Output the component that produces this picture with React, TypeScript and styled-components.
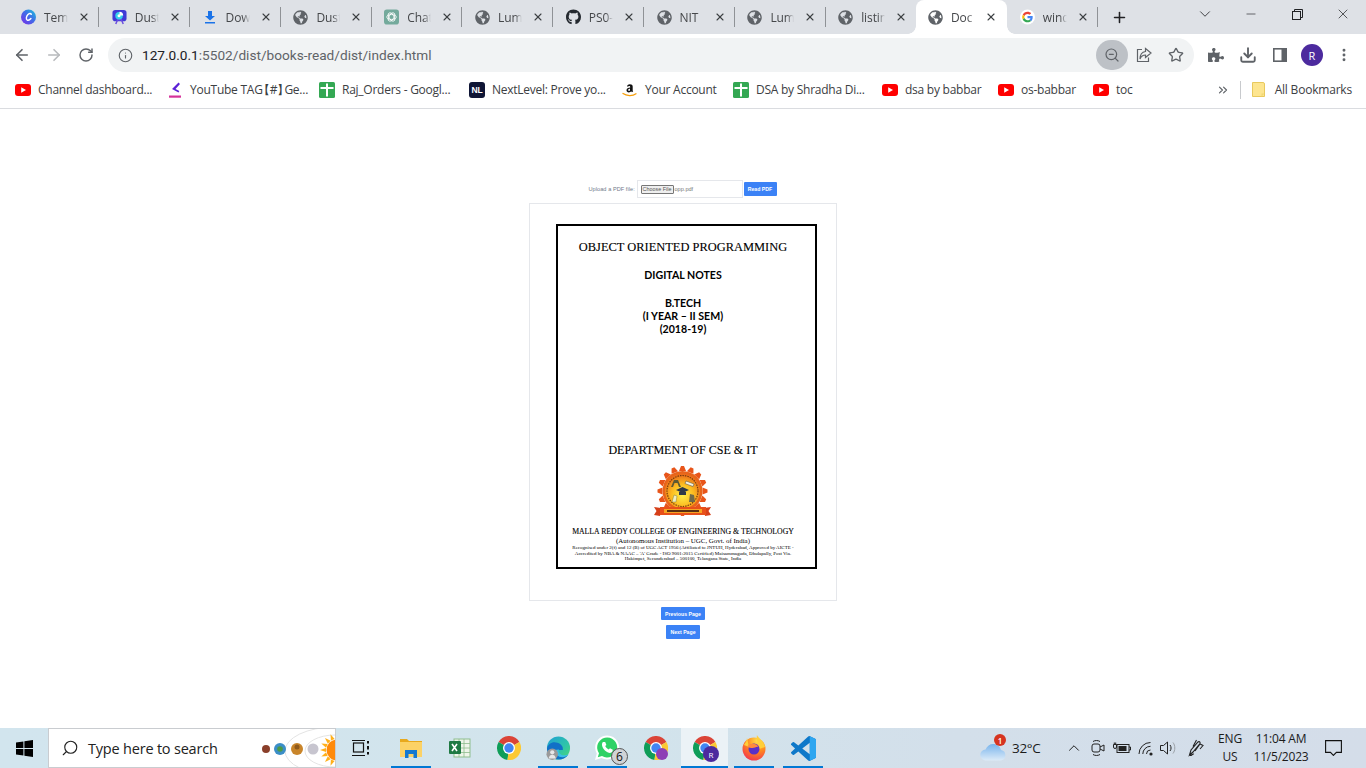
import React from "react";
import styled, { createGlobalStyle } from "styled-components";
import { FaGlobeAmericas, FaGithub, FaPuzzlePiece } from "react-icons/fa";
import {
  ArrowLeft, ArrowRight, RotateCw, Info, ZoomOut, Star, Download, MoreVertical, X, Plus, ChevronDown,
  Minus, Search, ChevronUp, ChevronsRight,
} from "lucide-react";

const Global = createGlobalStyle`
  html, body { margin: 0; padding: 0; background: #fff; overflow: hidden; }
  * { box-sizing: border-box; }
`;

const UI = `"Open Sans", "Noto Sans", "Liberation Sans", sans-serif`;
const Serif = `"Liberation Serif", serif`;

const Page = styled.div`
  width: 1366px; height: 768px; display: flex; flex-direction: column; font-family: ${UI}; overflow: hidden;
`;

/* ---- tab strip ---- */
const TabStrip = styled.div`
  height: 34px; background: #dee1e6; display: flex; padding-left: 9px; flex: none;
`;
const Tab = styled.div<{ $active?: boolean; $noSep?: boolean }>`
  width: 90.8px; flex: none; height: 34px; display: flex; align-items: center; padding-left: 12px;
  position: relative; color: #45474a; font-size: 12px; letter-spacing: -0.1px;
  background: ${(p) => (p.$active ? "#fff" : "transparent")};
  border-radius: ${(p) => (p.$active ? "8px 8px 0 0" : "0")};
  margin-left: ${(p) => (p.$active ? "-1px" : "0")};
  margin-right: ${(p) => (p.$active ? "1px" : "0")};
  &::after {
    content: ""; display: ${(p) => (p.$noSep ? "none" : "block")}; position: absolute; right: 0.5px; top: 7px; width: 1px; height: 20px; background: #8f9296;
  }
`;
const ActiveFlare = styled.span<{ $side: "left" | "right" }>`
  position: absolute; bottom: 0; width: 8px; height: 8px;
  ${(p) => (p.$side === "left" ? "left: -8px;" : "right: -8px;")}
  background: radial-gradient(circle at ${(p) => (p.$side === "left" ? "0 0" : "100% 0")}, transparent 7.5px, #fff 8px);
`;
const TabIcon = styled.span`
  width: 15px; height: 16px; flex: none; display: flex; align-items: center; justify-content: center; color: #5f6368; margin-right: 8px;
`;
const TabTitle = styled.span`
  width: 24px; flex: none; overflow: hidden; white-space: nowrap; font-size: 12px;
  -webkit-mask-image: linear-gradient(90deg, #000 70%, transparent 100%);
  mask-image: linear-gradient(90deg, #000 70%, transparent 100%);
`;
const TabClose = styled.span`
  margin-left: 10px; display: flex; color: #3c4043;
`;
const NewTab = styled.div`
  width: 42px; height: 34px; display: flex; align-items: center; justify-content: center; color: #202124; flex: none;
`;
const Spacer = styled.div`flex: 1;`;
const WinBtn = styled.div`
  width: 46px; height: 28px; display: flex; align-items: center; justify-content: center; color: #202124; flex: none;
`;
const RestoreIcon = styled.svg`width: 11px; height: 11px;`;

/* ---- toolbar ---- */
const Toolbar = styled.div`
  height: 38px; background: #fff; display: flex; align-items: flex-start; padding-top: 4px; flex: none; position: relative;
`;
const NavBtn = styled.div<{ $dim?: boolean }>`
  width: 32px; height: 34px; display: flex; align-items: center; justify-content: center; flex: none;
  color: ${(p) => (p.$dim ? "#b8babd" : "#5f6368")};
`;
const NavRow = styled.div`display: flex; padding-left: 6px; width: 108px; flex: none;`;
const Omnibox = styled.div`
  width: 1086px; height: 34px; background: #f1f3f4; border-radius: 17px; display: flex; align-items: center; flex: none;
  padding-left: 10px;
`;
const UrlInfo = styled.span`display: flex; color: #5f6368; width: 24px; flex: none;`;
const Url = styled.span`font-family: "Roboto", sans-serif; font-size: 13.65px; color: #5f6368; white-space: nowrap;
  b { font-weight: 400; color: #202124; }
`;
const OmniActions = styled.div`margin-left: auto; display: flex; align-items: center; padding-right: 2px;`;
const ZoomPill = styled.div`
  width: 32px; height: 30px; border-radius: 15px; background: #bdc1c6; display: flex; align-items: center; justify-content: center; color: #5f6368;
`;
const OmniBtn = styled.div`width: 32px; height: 30px; display: flex; align-items: center; justify-content: center; color: #5f6368;`;
const ToolBtns = styled.div`display: flex; align-items: center; height: 34px; padding-left: 6px;`;
const ToolBtn = styled.div`width: 32px; height: 34px; display: flex; align-items: center; justify-content: center; color: #5f6368; flex: none;`;
const Avatar = styled.div<{ $size?: number; $color?: string }>`
  width: ${(p) => p.$size ?? 22}px; height: ${(p) => p.$size ?? 22}px; border-radius: 50%; background: ${(p) => p.$color ?? "#4c2a9e"}; color: #fff;
  font-size: ${(p) => ((p.$size ?? 22) > 16 ? 11 : 8)}px; display: flex; align-items: center; justify-content: center;
`;

/* ---- bookmarks ---- */
const BookmarkBar = styled.div`
  height: 37px; background: #fff; border-bottom: 1px solid #dadce0; display: flex; align-items: center; padding: 0 0 1px 15px; flex: none;
`;
const Bookmark = styled.div<{ $w: number }>`
  width: ${(p) => p.$w}px; flex: none; display: flex; align-items: center; gap: 7px; font-size: 12px; color: #3c4043; white-space: nowrap; letter-spacing: -0.25px;
`;
const Squeezed = styled.span`margin: 0 -5px; letter-spacing: 0;`;
const BmIcon = styled.span`width: 16px; height: 16px; flex: none; display: flex; align-items: center; justify-content: center;`;
const BmRight = styled.div`
  margin-left: auto; display: flex; align-items: center; font-size: 12px; color: #3c4043; padding-right: 14px; letter-spacing: -0.2px;
`;
const BmDivider = styled.span`width: 1px; height: 18px; background: #c8cacd; margin: 0 11px 0 10px;`;
const BmLabel = styled.span`margin-left: 10px;`;

/* ---- page content ---- */
const Main = styled.main`
  flex: 1; background: #fff; display: flex; flex-direction: column; align-items: center; padding-top: 71px; min-height: 0;
`;
const UploadRow = styled.div`
  display: flex; align-items: center; height: 18px; font-family: "Liberation Sans", sans-serif; font-size: 5.6px; color: #6b7280;
`;
const UploadLabel = styled.span`width: 48px; flex: none; white-space: nowrap; color: #6f7a8a; letter-spacing: 0.05px; margin-left: 1px;`;
const FileBox = styled.div`
  width: 106px; height: 18px; border: 1px solid #e5e7eb; display: flex; align-items: center; padding-left: 3px; gap: 1px; flex: none; background: #fff; color: #777;
`;
const FileBtn = styled.span`
  width: 33px; height: 9px; border: 1px solid #767676; border-radius: 1px; background: #efefef; color: #555; font-size: 5.4px; text-align: center; line-height: 7px; flex: none;
`;
const BlueBtn = styled.button<{ $w: number; $h?: number }>`
  width: ${(p) => p.$w}px; height: ${(p) => p.$h ?? 14}px; background: #3b82f6; border: 0; border-radius: 1px; color: #fff; font-family: "Liberation Sans", sans-serif; font-weight: 700; font-size: 5.2px; padding: 0; flex: none; display: block;
`;
const ReadBtn = styled(BlueBtn)`margin-left: 1px; margin-right: 2px;`;
const Card = styled.div`
  width: 308px; height: 398px; border: 1px solid #e5e7eb; margin-top: 5px; padding: 20px 0 0 26px; background: #fff;
`;
const Sheet = styled.div`
  width: 261px; height: 345px; border: 2px solid #000; display: flex; flex-direction: column; align-items: center; color: #000; padding: 14px 7px 0 0;
`;
const DocTitle = styled.div`font-family: ${Serif}; font-size: 12.45px; line-height: 14px; white-space: nowrap; -webkit-text-stroke: 0.12px #000;`;
const DocHead = styled.div<{ $top?: number }>`
  font-family: "Lato", sans-serif; font-weight: 700; font-size: 10.6px; line-height: 13px; white-space: nowrap; margin-top: ${(p) => p.$top ?? 0}px;
`;
const DeptTitle = styled(DocTitle)`margin-top: 107px; font-size: 12.05px;`;
const Logo = styled.svg`width: 58px; height: 52px; margin-top: 9px; flex: none; display: block;`;
const College = styled.div`font-family: ${Serif}; font-weight: 400; font-size: 7.75px; line-height: 9px; margin-top: 9px; white-space: nowrap; -webkit-text-stroke: 0.1px #000;`;
const Auto = styled.div`font-family: ${Serif}; font-size: 6.9px; line-height: 9px; white-space: nowrap;`;
const Tiny = styled.div`font-family: ${Serif}; font-size: 4.98px; line-height: 5.7px; white-space: nowrap; text-align: center;`;
const PageBtns = styled.div`display: flex; flex-direction: column; align-items: center; gap: 5px; margin-top: 6px;`;

/* ---- taskbar ---- */
const Taskbar = styled.div`
  height: 40px; flex: none; display: flex; align-items: stretch;
  background: linear-gradient(90deg, #d2e5ee 0%, #d2e4ec 45%, #d3dfea 70%, #d4dde9 100%);
`;
const StartBtn = styled.div`width: 48px; display: flex; align-items: center; justify-content: center; flex: none;`;
const SearchBox = styled.div`
  width: 288px; flex: none; background: #fff; border: 1px solid #c9ccd0; display: flex; align-items: center; padding-left: 12px; position: relative; font-size: 14.5px; color: #222; font-family: "Open Sans", sans-serif; overflow: hidden; letter-spacing: -0.2px;
`;
const SearchText = styled.span`margin-left: 9px; white-space: nowrap;`;
const Planets = styled.svg`position: absolute; right: 0; top: 0; width: 76px; height: 40px;`;
const TaskItem = styled.div<{ $open?: boolean; $active?: boolean; $flat?: boolean }>`
  width: ${(p) => (p.$active ? 47 : 49)}px; flex: none; display: flex; align-items: center; justify-content: center; position: relative;
  margin-left: ${(p) => (p.$active ? 2 : 0)}px;
  padding-left: ${(p) => (p.$active || p.$flat ? 0 : 3)}px;
  background: ${(p) => (p.$active ? "rgba(255,255,255,.55)" : "transparent")};
  &::after {
    content: ""; display: ${(p) => (p.$open ? "block" : "none")}; position: absolute; bottom: 0; height: 2px; background: #0078d4;
    left: ${(p) => (p.$active ? 0 : 6)}px; right: ${(p) => (p.$active ? 0 : 3)}px;
  }
`;
const Badge = styled.span`
  position: absolute; right: 2px; bottom: 3px; width: 17px; height: 17px; border-radius: 50%; background: #d0d3d6; border: 1px solid #555; color: #111; font-size: 12px; display: flex; align-items: center; justify-content: center; line-height: 1;
`;
const AvatarBadge = styled.span<{ $right: number; $bottom: number }>`position: absolute; right: ${(p) => p.$right}px; bottom: ${(p) => p.$bottom}px;`;
const Tray = styled.div`margin-left: auto; display: flex; align-items: center; color: #1b1b1b; font-size: 13.5px;`;
const Weather = styled.div`position: relative; width: 26px; height: 26px; flex: none; margin-right: 6px; display: flex; align-items: flex-end;`;
const WeatherBadge = styled.span`
  position: absolute; right: 0; top: -1px; width: 12px; height: 12px; border-radius: 50%; background: #d6341f; color: #fff; font-size: 8px; display: flex; align-items: center; justify-content: center; font-weight: 600;
`;
const Temp = styled.span`width: 29px; font-size: 13.5px; white-space: nowrap; margin-right: 21px; letter-spacing: -0.3px;`;
const TrayIcon = styled.span<{ $w: number }>`width: ${(p) => p.$w}px; flex: none; display: flex; justify-content: center; align-items: center;`;
const Lang = styled.div`width: 30px; text-align: center; font-size: 12px; line-height: 18px; letter-spacing: -0.1px;`;
const Clock = styled.div`width: 62px; margin-left: 5px; text-align: center; font-size: 12px; line-height: 18px; white-space: nowrap; letter-spacing: -0.2px;`;
const Notify = styled.div`width: 54px; display: flex; justify-content: center; padding-right: 12px;`;

/* ---- drawn icons ---- */
const Chrome = ({ size = 24 }: { size?: number }) => (
  <svg width={size} height={size} viewBox="0 0 24 24">
    <path d="M12 12L1.6 6A12 12 0 0 1 22.4 6Z" fill="#db4437" />
    <path d="M12 12L1.6 6A12 12 0 0 0 10.5 23.9Z" fill="#0f9d58" />
    <path d="M12 12L22.4 6A12 12 0 0 1 10.5 23.9Z" fill="#fcc934" />
    <circle cx="12" cy="12" r="6" fill="#fff" />
    <circle cx="12" cy="12" r="4.7" fill="#4285f4" />
  </svg>
);
const YT = () => (
  <svg width="16" height="12" viewBox="0 0 16 12">
    <rect width="16" height="12" rx="3" fill="#f00" />
    <path d="M6.2 3.2L11 6L6.2 8.8Z" fill="#fff" />
  </svg>
);
const Sheets = () => (
  <svg width="16" height="16" viewBox="0 0 16 16">
    <rect width="16" height="16" rx="1.5" fill="#34a853" />
    <path d="M7 1.500h2V5h5.500v2H9v7.500H7V7H1.500V5H7z" fill="#fff" />
  </svg>
);
const Canva = () => (
  <svg width="16" height="16" viewBox="0 0 16 16">
    <defs>
      <linearGradient id="cv" x1="0" y1="1" x2="1" y2="0">
        <stop offset="0" stopColor="#7d2ae8" />
        <stop offset="0.55" stopColor="#3f6ee8" />
        <stop offset="1" stopColor="#19c8d8" />
      </linearGradient>
    </defs>
    <circle cx="8" cy="8" r="8" fill="url(#cv)" />
    <path d="M11 5.2C10.4 3.8 8.6 4 7.2 5.6 5.6 7.4 5.2 10 6.4 11c1.2.9 3 .1 4.2-1.4" fill="none" stroke="#fff" strokeWidth="1.5" strokeLinecap="round" />
  </svg>
);
const DustIcon = () => (
  <svg width="16" height="16" viewBox="0 0 16 16">
    <rect x="0.5" y="0.5" width="15" height="12" rx="3" fill="#3f3ad6" />
    <path d="M4 15.5L6 11h4l2 4.5" fill="none" stroke="#6a4ce0" strokeWidth="1.6" />
    <circle cx="7.5" cy="6.6" r="4" fill="#35d0ea" />
    <path d="M8 2.4a4.2 4.2 0 0 1 4 4H8z" fill="#fff" />
    <circle cx="7.5" cy="6.6" r="1.6" fill="#fff" />
  </svg>
);
const DlIcon = () => (
  <svg width="14" height="14" viewBox="0 0 14 14">
    <path d="M5 1h4v5h3L7 10.5 2 6h3z" fill="#1a73e8" />
    <rect x="2" y="12" width="10" height="1.5" fill="#1a73e8" />
  </svg>
);
const GptIcon = () => (
  <svg width="16" height="16" viewBox="0 0 16 16">
    <rect width="16" height="16" rx="3" fill="#74aa9c" />
    <g fill="none" stroke="#fff" strokeWidth="0.9">
      <ellipse cx="8" cy="8" rx="5" ry="2.6" />
      <ellipse cx="8" cy="8" rx="5" ry="2.6" transform="rotate(60 8 8)" />
      <ellipse cx="8" cy="8" rx="5" ry="2.6" transform="rotate(120 8 8)" />
    </g>
  </svg>
);
const GoogleG = () => (
  <svg width="16" height="16" viewBox="0 0 48 48">
    <circle cx="24" cy="24" r="24" fill="#fff" />
    <path fill="#ea4335" d="M24 14c2.8 0 5 1 6.800 2.600l5-5C32.600 8.700 28.700 7 24 7c-6.700 0-12.400 3.800-15.200 9.400l5.800 4.500C16 17 19.700 14 24 14z" />
    <path fill="#4285f4" d="M40.600 24.500c0-1.200-.1-2.300-.3-3.500H24v6.700h9.400c-.4 2.200-1.600 4-3.500 5.200l5.500 4.300c3.200-3 5.200-7.400 5.200-12.700z" />
    <path fill="#fbbc05" d="M14.600 27.100c-.4-1-.6-2-.6-3.100s.2-2.100.6-3.100l-5.800-4.500C7.700 18.700 7 21.300 7 24s.7 5.300 1.800 7.600z" />
    <path fill="#34a853" d="M24 41c4.600 0 8.400-1.500 11.400-4.100l-5.500-4.300c-1.500 1-3.500 1.700-5.900 1.700-4.300 0-8-3-9.400-6.900l-5.800 4.500C11.600 37.200 17.300 41 24 41z" />
  </svg>
);
const Globe = () => <FaGlobeAmericas size={15} color="#5f6368" />;
const TagIcon = () => (
  <svg width="16" height="18" viewBox="0 0 16 18">
    <path d="M11.500 1.500L5 8l6.500 3.500.8-1.600L8.500 8l4.500-5z" fill="#5b21d6" />
    <rect x="2" y="14.500" width="12" height="2.200" fill="#d6339b" />
  </svg>
);
const NLIcon = styled.span`
  width: 16px; height: 16px; border-radius: 3px; background: #0f1535; color: #fff; font-family: "Liberation Sans", sans-serif; font-weight: 700; font-size: 8.500px; display: flex; align-items: center; justify-content: center;
`;
const AmazonIcon = () => (
  <svg width="16" height="16" viewBox="0 0 16 16">
    <path d="M5 4.200c.3-1.300 1.500-2 2.900-2 1.700 0 2.800.8 2.800 2.300v3.700c0 .5.200.8.500 1.100l-1.200 1c-.4-.3-.6-.6-.8-1-.6.800-1.400 1.100-2.300 1.100-1.400 0-2.400-.8-2.400-2.200 0-1.900 1.700-2.500 3.700-2.600v-.6c0-.7-.4-1.100-1-1.100-.6 0-1 .3-1.200.9zm3 2.500c-1 .1-1.800.3-1.800 1.300 0 .6.300 1 .8 1 .7 0 1-.7 1-1.500z" fill="#111" />
    <path d="M1 11.500c3.500 2.500 9.500 2.800 13 .3" fill="none" stroke="#f59e0b" strokeWidth="1.300" strokeLinecap="round" />
  </svg>
);
const FolderIcon = () => (
  <svg width="13" height="15" viewBox="0 0 13 15">
    <path d="M.5.5h10.500a1.500 1.500 0 0 1 1.500 1.500V14.500H.5z" fill="#fde58f" stroke="#e8c95d" strokeWidth="1" />
    <path d="M9.500 11.500h3l-3 3z" fill="#f2d873" />
  </svg>
);
const ShareIcon = () => (
  <svg width="18" height="18" viewBox="0 0 18 18" fill="none" stroke="#5f6368" strokeWidth="1.200">
    <path d="M7 3.500H2.500v12h11v-4" />
    <path d="M10.500 2.500L16 7l-5.500 4.500V9C7.500 9 6 10.500 5 13c0-4 2-7 5.500-7.500z" />
  </svg>
);
const SidePanel = () => (
  <svg width="14" height="14" viewBox="0 0 14 14">
    <rect x="0.800" y="0.800" width="12.400" height="12.400" fill="none" stroke="#5f6368" strokeWidth="1.600" />
    <rect x="8.500" y="1" width="4.500" height="12" fill="#5f6368" />
  </svg>
);
const WinLogo = () => (
  <svg width="17" height="17" viewBox="0 0 17 17" fill="#000">
    <path d="M0 2.500L7.400 1.400V8H0zM8.400 1.300L17 0V8H8.400zM0 9h7.400v6.600L0 14.500zM8.400 9H17v8L8.400 15.700z" />
  </svg>
);
const TaskViewIcon = () => (
  <svg width="18" height="18" viewBox="0 0 18 18" fill="none" stroke="#111" strokeWidth="1.200">
    <rect x="1.500" y="4" width="10" height="9" />
    <path d="M0 1.500h13M0 16.500h13" />
    <rect x="15" y="2" width="2" height="2.500" fill="#111" stroke="none" />
    <rect x="15" y="7" width="2" height="3.500" fill="#111" stroke="none" />
    <rect x="15" y="13" width="2" height="2.500" fill="#111" stroke="none" />
  </svg>
);
const ExplorerIcon = () => (
  <svg width="22" height="22" viewBox="0 0 22 22">
    <path d="M0 2h7l2 2h13v15H0z" fill="#e8a91d" />
    <rect x="0" y="5" width="22" height="15" fill="#fcd266" />
    <path d="M5 21v-8h12v8h-3.500v-4h-5v4z" fill="#1479d1" />
  </svg>
);
const ExcelIcon = () => (
  <svg width="24" height="24" viewBox="0 0 24 24">
    <rect x="6" y="3" width="16" height="18" fill="#eef5ea" stroke="#8ebd8e" />
    <path d="M11 3v18M16 3v18M6 7.500h16M6 12h16M6 16.500h16" stroke="#8ebd8e" strokeWidth="0.800" />
    <rect x="1" y="5" width="12" height="13" rx="1" fill="#1f7a43" />
    <path d="M4 8l5 7M9 8l-5 7" stroke="#fff" strokeWidth="1.600" />
  </svg>
);
const EdgeIcon = () => (
  <svg width="25" height="25" viewBox="0 0 26 26">
    <defs>
      <linearGradient id="e1" x1="0" y1="0" x2="1" y2="1">
        <stop offset="0" stopColor="#1f9fd6" />
        <stop offset="0.6" stopColor="#2fc5a8" />
        <stop offset="1" stopColor="#52d86e" />
      </linearGradient>
    </defs>
    <circle cx="13" cy="12.500" r="12" fill="url(#e1)" />
    <path d="M1 13C2 8 7 5 12 7c4 1.500 6 4 5.500 7.500H9c0 4 4 7 8 7 2 0 4-.7 6-2-2 3-5.500 5-10 5C6 24.500 1 19 1 13z" fill="#1170c7" />
    <path d="M9 14.500c0 4.500 4 7.500 8 7.500 2.500 0 5-1 6.500-3-3 1.500-7 1.500-9-.5-1.500-1.500-1.800-3-1-4.500z" fill="#3ac0e8" />
    <circle cx="6.500" cy="19" r="6" fill="#9a9a9a" />
    <circle cx="6.500" cy="17" r="2.200" fill="#e8e8e8" />
    <path d="M2.800 23.500c.5-3 2-4 3.700-4s3.200 1 3.700 4z" fill="#e8e8e8" />
  </svg>
);
const WhatsappIcon = () => (
  <svg width="26" height="26" viewBox="0 0 26 26">
    <path d="M1 25l1.800-6.500A12 12 0 1 1 7.500 23z" fill="#fff" />
    <path d="M3.800 22.200l1.200-4A10 10 0 1 1 8 21z" fill="#2fd266" />
    <path d="M9 7c-1 1-1.500 2.500-.5 5 1 2.500 3 4.500 5.500 5.500 2 .8 3.500.3 4.500-1l.3-1.800-2.800-1.400-1.300 1.300c-1.500-.7-2.800-2-3.500-3.500l1.200-1.200-1.200-2.900z" fill="#fff" />
  </svg>
);
const FirefoxIcon = () => (
  <svg width="24" height="26" viewBox="0 0 24 26">
    <defs>
      <radialGradient id="ff" cx="0.65" cy="0.15" r="1">
        <stop offset="0" stopColor="#ffe14a" />
        <stop offset="0.45" stopColor="#ff8a1e" />
        <stop offset="1" stopColor="#f0245a" />
      </radialGradient>
    </defs>
    <circle cx="12" cy="14" r="11.500" fill="url(#ff)" />
    <path d="M15 0c1 3 7 6 8 12l-6 2c0-4-3-9-2-14zM5 3c0 3-2 5-3 7l5 2c-1-3-1-6-2-9z" fill="#ffcf3a" />
    <circle cx="12" cy="14" r="5.500" fill="#5a30c8" />
    <path d="M5.500 11c3-3 9-3 11 1-2-1-3.500 1-6 1-1.500 0-4 0-5-2z" fill="#ff8a3c" />
  </svg>
);
const VsCodeIcon = () => (
  <svg width="25" height="25" viewBox="0 0 24 24">
    <path fill="#0e78c9" d="M23.15 2.587L18.21.21a1.494 1.494 0 0 0-1.705.29l-9.46 8.63-4.12-3.128a.999.999 0 0 0-1.276.057L.327 7.261A1 1 0 0 0 .326 8.74L3.899 12 .326 15.26a1 1 0 0 0 .001 1.479L1.65 17.94a.999.999 0 0 0 1.276.057l4.12-3.128 9.46 8.63a1.492 1.492 0 0 0 1.704.29l4.942-2.377A1.5 1.5 0 0 0 24 20.06V3.939a1.5 1.5 0 0 0-.85-1.352zm-5.146 14.861L10.826 12l7.178-5.448v10.896z" />
    <path fill="#2ea6f0" d="M18 0.200l5.150 2.387A1.500 1.500 0 0 1 24 3.939V20.060a1.500 1.500 0 0 1-.85 1.352L18 23.800z" />
  </svg>
);
const CloudIcon = () => (
  <svg width="26" height="20" viewBox="0 0 26 20">
    <defs>
      <linearGradient id="cl" x1="0" y1="0" x2="0" y2="1">
        <stop offset="0" stopColor="#79b4ec" />
        <stop offset="1" stopColor="#dcebf8" />
      </linearGradient>
    </defs>
    <path d="M6 19.500a5.500 5.500 0 0 1-.5-11C7 5 10 3 13 3c4 0 7 2.500 8 6a5.300 5.300 0 0 1-.5 10.500z" fill="url(#cl)" />
  </svg>
);
const CameraTray = () => (
  <svg width="16" height="18" viewBox="0 0 16 18" fill="none" stroke="#222" strokeWidth="1">
    <rect x="2" y="5" width="8" height="8" rx="2" />
    <path d="M10 8l4-2v6l-4-2" />
    <path d="M3 2.500c2-1.300 5-1.300 7 0M3 15.500c2 1.300 5 1.300 7 0" />
  </svg>
);
const BatteryTray = () => (
  <svg width="18" height="14" viewBox="0 0 18 14" fill="none" stroke="#222" strokeWidth="1">
    <rect x="4" y="3.500" width="12" height="8" />
    <rect x="5.500" y="5" width="8" height="5" fill="#222" stroke="none" />
    <path d="M16 6h1.500v3H16M0.500 3.500h3v2.500a1.500 1.500 0 0 1-3 0zM1.300 1.500v2M2.700 1.500v2" />
  </svg>
);
const WifiTray = () => (
  <svg width="17" height="17" viewBox="0 0 17 17" fill="none" stroke="#222" strokeWidth="1">
    <path d="M9.500 14a4 4 0 0 1 4-4M5.800 14a7.700 7.700 0 0 1 7.700-7.700M2 14A11.500 11.500 0 0 1 13.500 2.500" />
    <circle cx="14" cy="14" r="1.600" fill="#222" stroke="none" />
  </svg>
);
const VolumeTray = () => (
  <svg width="18" height="18" viewBox="0 0 18 18" fill="none" stroke="#222" strokeWidth="1">
    <path d="M1.500 6.500h3l4-3.500v12l-4-3.500h-3z" />
    <path d="M11 6c1.400 1.800 1.400 4.200 0 6" />
    <path d="M14 3.500c2.400 3 2.400 8 0 11" stroke="#9aa0a6" />
  </svg>
);
const PenTray = () => (
  <svg width="18" height="18" viewBox="0 0 18 18" fill="none" stroke="#222" strokeWidth="1.100">
    <path d="M1.500 16L3 11 10 3c1-1 2.500 0 2 1.500L5 13zM5 7.500L8.500 1M7 12l5-7 3 1.500-3 3.500M2 16.500c2 .5 2-2 4-1.500" />
  </svg>
);
const NotifyIcon = () => (
  <svg width="17" height="16" viewBox="0 0 17 16" fill="none" stroke="#111" strokeWidth="1.100">
    <path d="M0.600 0.600h15.800v11.800h-5l-3 3-2.900-3H0.600z" />
  </svg>
);

const tabs: { t: string; i: React.ReactNode }[] = [
  { t: "Tem", i: <Canva /> },
  { t: "Dust", i: <DustIcon /> },
  { t: "Dow", i: <DlIcon /> },
  { t: "Dust", i: <Globe /> },
  { t: "Chat", i: <GptIcon /> },
  { t: "Lum", i: <Globe /> },
  { t: "PS0-", i: <FaGithub size={16} color="#24292f" /> },
  { t: "NIT", i: <Globe /> },
  { t: "Lum", i: <Globe /> },
  { t: "listin", i: <Globe /> },
  { t: "Doc", i: <Globe /> },
  { t: "wind", i: <GoogleG /> },
];

const marks: { t: React.ReactNode; k: string; w: number; i: React.ReactNode }[] = [
  { k: "a", t: "Channel dashboard...", w: 152, i: <YT /> },
  { k: "b", t: <span>YouTube TAG<Squeezed>【#】</Squeezed>Ge...</span>, w: 152, i: <TagIcon /> },
  { k: "c", t: "Raj_Orders - Googl...", w: 150, i: <Sheets /> },
  { k: "d", t: "NextLevel: Prove yo...", w: 153, i: <NLIcon>NL</NLIcon> },
  { k: "e", t: "Your Account", w: 111, i: <AmazonIcon /> },
  { k: "f", t: "DSA by Shradha Di...", w: 149, i: <Sheets /> },
  { k: "g", t: "dsa by babbar", w: 116, i: <YT /> },
  { k: "h", t: "os-babbar", w: 95, i: <YT /> },
  { k: "i", t: "toc", w: 60, i: <YT /> },
];

const teeth = Array.from({ length: 16 }, (_, k) => (k * 360) / 16);

export default function App() {
  return (
    <Page>
      <Global />
      <TabStrip>
        {tabs.map((tab, k) => (
          <Tab key={k} $active={k === 10} $noSep={k === 9 || k === 10}>
            <TabIcon>{tab.i}</TabIcon>
            <TabTitle>{tab.t}</TabTitle>
            <TabClose><X size={12} strokeWidth={2.2} /></TabClose>
            {k === 10 && <ActiveFlare $side="left" />}
            {k === 10 && <ActiveFlare $side="right" />}
          </Tab>
        ))}
        <NewTab><Plus size={17} strokeWidth={2.2} /></NewTab>
        <Spacer />
        <WinBtn><ChevronDown size={18} strokeWidth={1.1} /></WinBtn>
        <WinBtn><Minus size={14} strokeWidth={1.1} /></WinBtn>
        <WinBtn>
          <RestoreIcon viewBox="0 0 11 11" fill="none" stroke="#202124" strokeWidth="1">
            <rect x="0.500" y="2.500" width="8" height="8" />
            <path d="M2.500 2.500V0.500h8v8h-2" />
          </RestoreIcon>
        </WinBtn>
        <WinBtn><X size={16} strokeWidth={1.1} /></WinBtn>
      </TabStrip>

      <Toolbar>
        <NavRow>
          <NavBtn><ArrowLeft size={18} strokeWidth={2.2} /></NavBtn>
          <NavBtn $dim><ArrowRight size={18} strokeWidth={2.2} /></NavBtn>
          <NavBtn><RotateCw size={16} strokeWidth={2.2} /></NavBtn>
        </NavRow>
        <Omnibox>
          <UrlInfo><Info size={15} strokeWidth={1.8} /></UrlInfo>
          <Url><b>127.0.0.1</b>:5502/dist/books-read/dist/index.html</Url>
          <OmniActions>
            <ZoomPill><ZoomOut size={16} strokeWidth={1.8} /></ZoomPill>
            <OmniBtn><ShareIcon /></OmniBtn>
            <OmniBtn><Star size={16} strokeWidth={2} /></OmniBtn>
          </OmniActions>
        </Omnibox>
        <ToolBtns>
          <ToolBtn><FaPuzzlePiece size={16} /></ToolBtn>
          <ToolBtn><Download size={18} strokeWidth={2.5} /></ToolBtn>
          <ToolBtn><SidePanel /></ToolBtn>
          <ToolBtn><Avatar>R</Avatar></ToolBtn>
          <ToolBtn><MoreVertical size={16} strokeWidth={2.4} /></ToolBtn>
        </ToolBtns>
      </Toolbar>

      <BookmarkBar>
        {marks.map((m) => (
          <Bookmark key={m.k} $w={m.w}>
            <BmIcon>{m.i}</BmIcon>
            {m.t}
          </Bookmark>
        ))}
        <BmRight>
          <ChevronsRight size={14} strokeWidth={2} color="#5f6368" />
          <BmDivider />
          <FolderIcon />
          <BmLabel>All Bookmarks</BmLabel>
        </BmRight>
      </BookmarkBar>

      <Main>
        <UploadRow>
          <UploadLabel>Upload a PDF file:</UploadLabel>
          <FileBox><FileBtn>Choose File</FileBtn>opp.pdf</FileBox>
          <ReadBtn $w={33}>Read PDF</ReadBtn>
        </UploadRow>
        <Card>
          <Sheet>
            <DocTitle>OBJECT ORIENTED PROGRAMMING</DocTitle>
            <DocHead $top={15}>DIGITAL NOTES</DocHead>
            <DocHead $top={15}>B.TECH</DocHead>
            <DocHead>(I YEAR – II SEM)</DocHead>
            <DocHead>(2018-19)</DocHead>
            <DeptTitle>DEPARTMENT OF CSE &amp; IT</DeptTitle>
            <Logo viewBox="0 0 58 52">
              <defs>
                <radialGradient id="sun" cx="0.5" cy="0.62" r="0.6">
                  <stop offset="0" stopColor="#fff04a" />
                  <stop offset="0.55" stopColor="#fbb91f" />
                  <stop offset="1" stopColor="#ea6a1a" />
                </radialGradient>
              </defs>
              {teeth.map((a) => (
                <path key={a} d="M25 5L27 0h3l2 5z" fill="#e8551a" transform={`rotate(${a} 28.500 25)`} />
              ))}
              <circle cx="28.500" cy="25" r="20" fill="#e8641a" />
              <circle cx="28.500" cy="25" r="17.500" fill="url(#sun)" />
              <circle cx="28.500" cy="25" r="15.500" fill="none" stroke="#7a3a10" strokeWidth="1.200" strokeDasharray="1.500 1" />
              <path d="M17 21l3-7h4l3 7h-2l-1.500-4h-3L19 21z" fill="#5f5a33" />
              <path d="M32 15l8 3-1 2.500-8-3z" fill="#f6f2e0" stroke="#444" strokeWidth="0.500" />
              <path d="M22 24l6.500-3 6.500 3-6.500 3z" fill="#2f3a48" />
              <rect x="25" y="26" width="7" height="3" fill="#2f3a48" />
              <path d="M18 36l2-7 3 1-1 6z" fill="#f2efc0" stroke="#6a6a2a" strokeWidth="0.400" />
              <path d="M35 36l1-8 4 1 1 7z" fill="#6f6a4a" />
              <path d="M0 41l7 1-1 8-6-1 2.500-4zM57 41l-7 1 1 8 6-1-2.500-4z" fill="#d6401a" />
              <rect x="6" y="41" width="46" height="8" fill="#e8501a" />
              <rect x="10" y="43" width="38" height="4" fill="#f6a423" />
              <rect x="13" y="44" width="32" height="2" fill="#5a3012" />
            </Logo>
            <College>MALLA REDDY COLLEGE OF ENGINEERING &amp; TECHNOLOGY</College>
            <Auto>(Autonomous Institution – UGC, Govt. of India)</Auto>
            <Tiny>Recognised under 2(f) and 12 (B) of UGC ACT 1956 (Affiliated to JNTUH, Hyderabad, Approved by AICTE -</Tiny>
            <Tiny>Accredited by NBA &amp; NAAC – 'A' Grade - ISO 9001:2015 Certified) Maisammaguda, Dhulapally, Post Via.</Tiny>
            <Tiny>Hakimpet, Secunderabad – 500100, Telangana State, India</Tiny>
          </Sheet>
        </Card>
        <PageBtns>
          <BlueBtn $w={44} $h={13}>Previous Page</BlueBtn>
          <BlueBtn $w={34}>Next Page</BlueBtn>
        </PageBtns>
      </Main>

      <Taskbar>
        <StartBtn><WinLogo /></StartBtn>
        <SearchBox>
          <Search size={18} strokeWidth={1.5} style={{ transform: "scaleX(-1)" }} />
          <SearchText>Type here to search</SearchText>
          <Planets viewBox="0 0 76 40">
            <g fill="none" stroke="#e4e4e4" strokeWidth="1">
              <ellipse cx="76" cy="22" rx="30" ry="16" />
              <ellipse cx="76" cy="22" rx="50" ry="24" />
            </g>
            <circle cx="7" cy="20" r="4" fill="#8a3f2a" />
            <circle cx="21" cy="20" r="6" fill="#3b8ec7" />
            <circle cx="21" cy="20" r="2.800" fill="#4c9a45" />
            <circle cx="38" cy="20" r="6" fill="#c9852a" />
            <circle cx="38" cy="18" r="2.500" fill="#8f5a1c" />
            <circle cx="54" cy="20" r="5.500" fill="#c7c5cf" />
            <circle cx="78" cy="21" r="10.500" fill="#ff8a0a" />
            {[-100, -75, -50, -25, 0, 25, 50, 75, 100].map((a) => (
              <path key={a} d="M76 10l2-6 2 6z" fill="#ffb01a" transform={`rotate(${-90 + a * 0.9} 78 21)`} />
            ))}
          </Planets>
        </SearchBox>
        <TaskItem $flat><TaskViewIcon /></TaskItem>
        <TaskItem $open><ExplorerIcon /></TaskItem>
        <TaskItem><ExcelIcon /></TaskItem>
        <TaskItem><Chrome /></TaskItem>
        <TaskItem $open><EdgeIcon /></TaskItem>
        <TaskItem $open>
          <WhatsappIcon />
          <Badge>6</Badge>
        </TaskItem>
        <TaskItem>
          <Chrome />
          <AvatarBadge $right={11} $bottom={8}><Avatar $size={12} $color="#8e3fb5" /></AvatarBadge>
        </TaskItem>
        <TaskItem $open $active>
          <Chrome />
          <AvatarBadge $right={9} $bottom={6}><Avatar $size={16}>R</Avatar></AvatarBadge>
        </TaskItem>
        <TaskItem $open><FirefoxIcon /></TaskItem>
        <TaskItem $open><VsCodeIcon /></TaskItem>
        <Tray>
          <Weather>
            <CloudIcon />
            <WeatherBadge>1</WeatherBadge>
          </Weather>
          <Temp>32°C</Temp>
          <TrayIcon $w={24}><ChevronUp size={18} strokeWidth={1.3} /></TrayIcon>
          <TrayIcon $w={24}><CameraTray /></TrayIcon>
          <TrayIcon $w={24}><BatteryTray /></TrayIcon>
          <TrayIcon $w={23}><WifiTray /></TrayIcon>
          <TrayIcon $w={22}><VolumeTray /></TrayIcon>
          <TrayIcon $w={36}><PenTray /></TrayIcon>
          <Lang>ENG<br />US</Lang>
          <Clock>11:04 AM<br />11/5/2023</Clock>
          <Notify><NotifyIcon /></Notify>
        </Tray>
      </Taskbar>
    </Page>
  );
}
